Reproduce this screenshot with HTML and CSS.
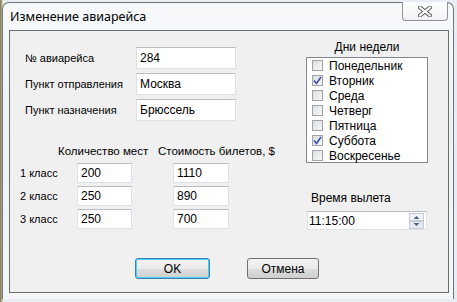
FILE: index.html
```html
<!DOCTYPE html>
<html lang="ru">
<head>
    <meta charset="UTF-8">
    <title>Изменение авиарейса</title>
    <link rel="stylesheet" href="styles.css">
</head>
<body>
    <div class="window">
        <div class="titlebar">
            <span class="title">Изменение авиарейса</span>
            <div class="close-btn">
                <svg width="14" height="11" viewBox="0 0 14 11">
                    <path d="M2 1.5 L12 9.5 M12 1.5 L2 9.5" stroke="#5a5a5a" stroke-width="4" stroke-linecap="square"/>
                    <path d="M2 1.5 L12 9.5 M12 1.5 L2 9.5" stroke="#ffffff" stroke-width="2" stroke-linecap="square"/>
                </svg>
            </div>
        </div>
        <div class="client">
            <div class="columns">
                <div class="left-col">
                    <div class="fields">
                        <label>№ авиарейса</label>
                        <div class="textbox">284</div>
                        <label>Пункт отправления</label>
                        <div class="textbox">Москва</div>
                        <label>Пункт назначения</label>
                        <div class="textbox">Брюссель</div>
                    </div>
                    <div class="classes">
                        <div class="class-head">
                            <span class="head-seats">Количество мест</span>
                            <span class="head-price">Стоимость билетов, $</span>
                        </div>
                        <div class="class-grid">
                            <label>1 класс</label>
                            <div class="textbox small">200</div>
                            <div class="textbox small price">1110</div>
                            <label>2 класс</label>
                            <div class="textbox small">250</div>
                            <div class="textbox small price">890</div>
                            <label>3 класс</label>
                            <div class="textbox small">250</div>
                            <div class="textbox small price">700</div>
                        </div>
                    </div>
                </div>
                <div class="right-col">
                    <div class="days-label">Дни недели</div>
                    <div class="days-list">
                        <div class="day"><span class="check"></span>Понедельник</div>
                        <div class="day"><span class="check checked"><svg width="9" height="9" viewBox="0 0 9 9"><path d="M1 4.5 L3.5 7.5 L8 1" fill="none" stroke="#3c4fa0" stroke-width="1.6"/></svg></span>Вторник</div>
                        <div class="day"><span class="check"></span>Среда</div>
                        <div class="day"><span class="check"></span>Четверг</div>
                        <div class="day"><span class="check"></span>Пятница</div>
                        <div class="day"><span class="check checked"><svg width="9" height="9" viewBox="0 0 9 9"><path d="M1 4.5 L3.5 7.5 L8 1" fill="none" stroke="#3c4fa0" stroke-width="1.6"/></svg></span>Суббота</div>
                        <div class="day"><span class="check"></span>Воскресенье</div>
                    </div>
                    <div class="time-label">Время вылета</div>
                    <div class="timepicker">
                        <span class="time-value">11:15:00</span>
                        <div class="spinner">
                            <svg width="15" height="16" viewBox="0 0 15 16">
                                <rect x="0.5" y="0.5" width="14" height="7" fill="#f2f4f7" stroke="#c5cbd3"/>
                                <rect x="0.5" y="8.5" width="14" height="7" fill="#e6eaf0" stroke="#c5cbd3"/>
                                <path d="M4.5 6 L7.5 3 L10.5 6 Z" fill="#4d6185"/>
                                <path d="M4.5 10 L7.5 13 L10.5 10 Z" fill="#4d6185"/>
                            </svg>
                        </div>
                    </div>
                </div>
            </div>
            <div class="buttons">
                <div class="button default">OK</div>
                <div class="button">Отмена</div>
            </div>
        </div>
    </div>
</body>
</html>
```
FILE: styles.css
```css
body {
    margin: 0;
    width: 457px;
    height: 302px;
    overflow: hidden;
    background: linear-gradient(90deg, #6b7380 0px, #c9b36a 2px, #e8edf3 3px);
    font-family: "Liberation Sans", Arial, sans-serif;
    font-size: 11px;
    color: #000;
}
.window {
    margin: 2px 0 0 2px;
    width: 450px;
    height: 296px;
    border: 1px solid #6f7478;
    border-bottom: none;
    border-radius: 7px 7px 0 0;
    background: linear-gradient(180deg, #f7f9fb 0%, #eef2f7 40%, #f4f6f9 100%);
    display: flex;
    flex-direction: column;
}
.titlebar {
    height: 27px;
    display: flex;
    align-items: flex-start;
    justify-content: space-between;
}
.title {
    font-family: "Noto Sans", "Open Sans", sans-serif;
    font-size: 12.5px;
    margin: 5px 0 0 7px;
    color: #000;
}
.close-btn {
    width: 44px;
    height: 18px;
    margin-right: 5px;
    margin-top: -1px;
    border: 1px solid #8f949a;
    border-top: none;
    border-radius: 0 0 4px 4px;
    background: linear-gradient(180deg, #ffffff 0%, #f1f3f6 100%);
    display: flex;
    align-items: center;
    justify-content: center;
}
.client {
    margin: 0 4px 0 6px;
    height: 261px;
    border: 1px solid #6d6d6d;
    background: #f0f0f0;
    display: flex;
    flex-direction: column;
}
.columns {
    display: flex;
}
.left-col {
    width: 296px;
}
.fields {
    display: grid;
    grid-template-columns: 111px 100px;
    row-gap: 4px;
    padding: 16px 0 0 15px;
    align-items: center;
}
.textbox {
    box-sizing: border-box;
    height: 22px;
    background: #fff;
    border: 1px solid #dde2e8;
    border-top-color: #b8bdc4;
    padding-left: 3px;
    display: flex;
    align-items: center;
    font-size: 12px;
}
.classes {
    margin-top: 23px;
}
.class-head {
    display: flex;
    height: 14px;
    align-items: center;
    font-size: 11.5px;
}
.head-seats {
    margin-left: 48px;
    width: 100px;
}
.class-grid {
    display: grid;
    grid-template-columns: 57px 55px 56px;
    column-gap: 0;
    row-gap: 3px;
    padding: 5px 0 0 10px;
    align-items: center;
}
.textbox.small {
    height: 20px;
}
.textbox.price {
    margin-left: 41px;
    width: 56px;
}
.class-grid .price {
    grid-column: 3;
}
.right-col {
    width: 122px;
    padding-top: 9px;
}
.days-label {
    text-align: center;
    height: 14px;
    line-height: 14px;
    font-size: 12px;
    margin-bottom: 3px;
}
.days-list {
    box-sizing: border-box;
    height: 106px;
    border: 1px solid #828790;
    background: #fff;
    padding: 0 0 0 5px;
}
.day {
    height: 15px;
    display: flex;
    align-items: center;
    font-size: 12px;
}
.check {
    box-sizing: border-box;
    width: 11px;
    height: 11px;
    border: 1px solid #a0a4aa;
    background: linear-gradient(135deg, #dcdfe3 0%, #f6f7f8 100%);
    margin-right: 6px;
    display: flex;
    align-items: center;
    justify-content: center;
}
.time-label {
    margin: 28px 0 0 5px;
    height: 14px;
    line-height: 14px;
    font-size: 12px;
}
.timepicker {
    box-sizing: border-box;
    margin-top: 6px;
    width: 120px;
    height: 19px;
    margin-left: 1px;
    background: #fff;
    border: 1px solid #dde2e8;
    border-top-color: #b8bdc4;
    display: flex;
    align-items: center;
    justify-content: space-between;
    font-size: 12px;
    padding-left: 1px;
}
.spinner {
    display: flex;
    margin-right: 2px;
}
.buttons {
    display: flex;
    gap: 37px;
    padding-left: 125px;
    margin-top: auto;
    margin-bottom: 13px;
}
.button {
    box-sizing: border-box;
    width: 72px;
    height: 21px;
    border: 1px solid #707070;
    border-radius: 3px;
    background: linear-gradient(180deg, #f2f2f2 0%, #ebebeb 50%, #dddddd 51%, #cfcfcf 100%);
    display: flex;
    align-items: center;
    justify-content: center;
    font-size: 12px;
}
.button.default {
    width: 75px;
    border-color: #3c7fb1;
    box-shadow: inset 0 0 0 1px #48d0f8;
}
```
